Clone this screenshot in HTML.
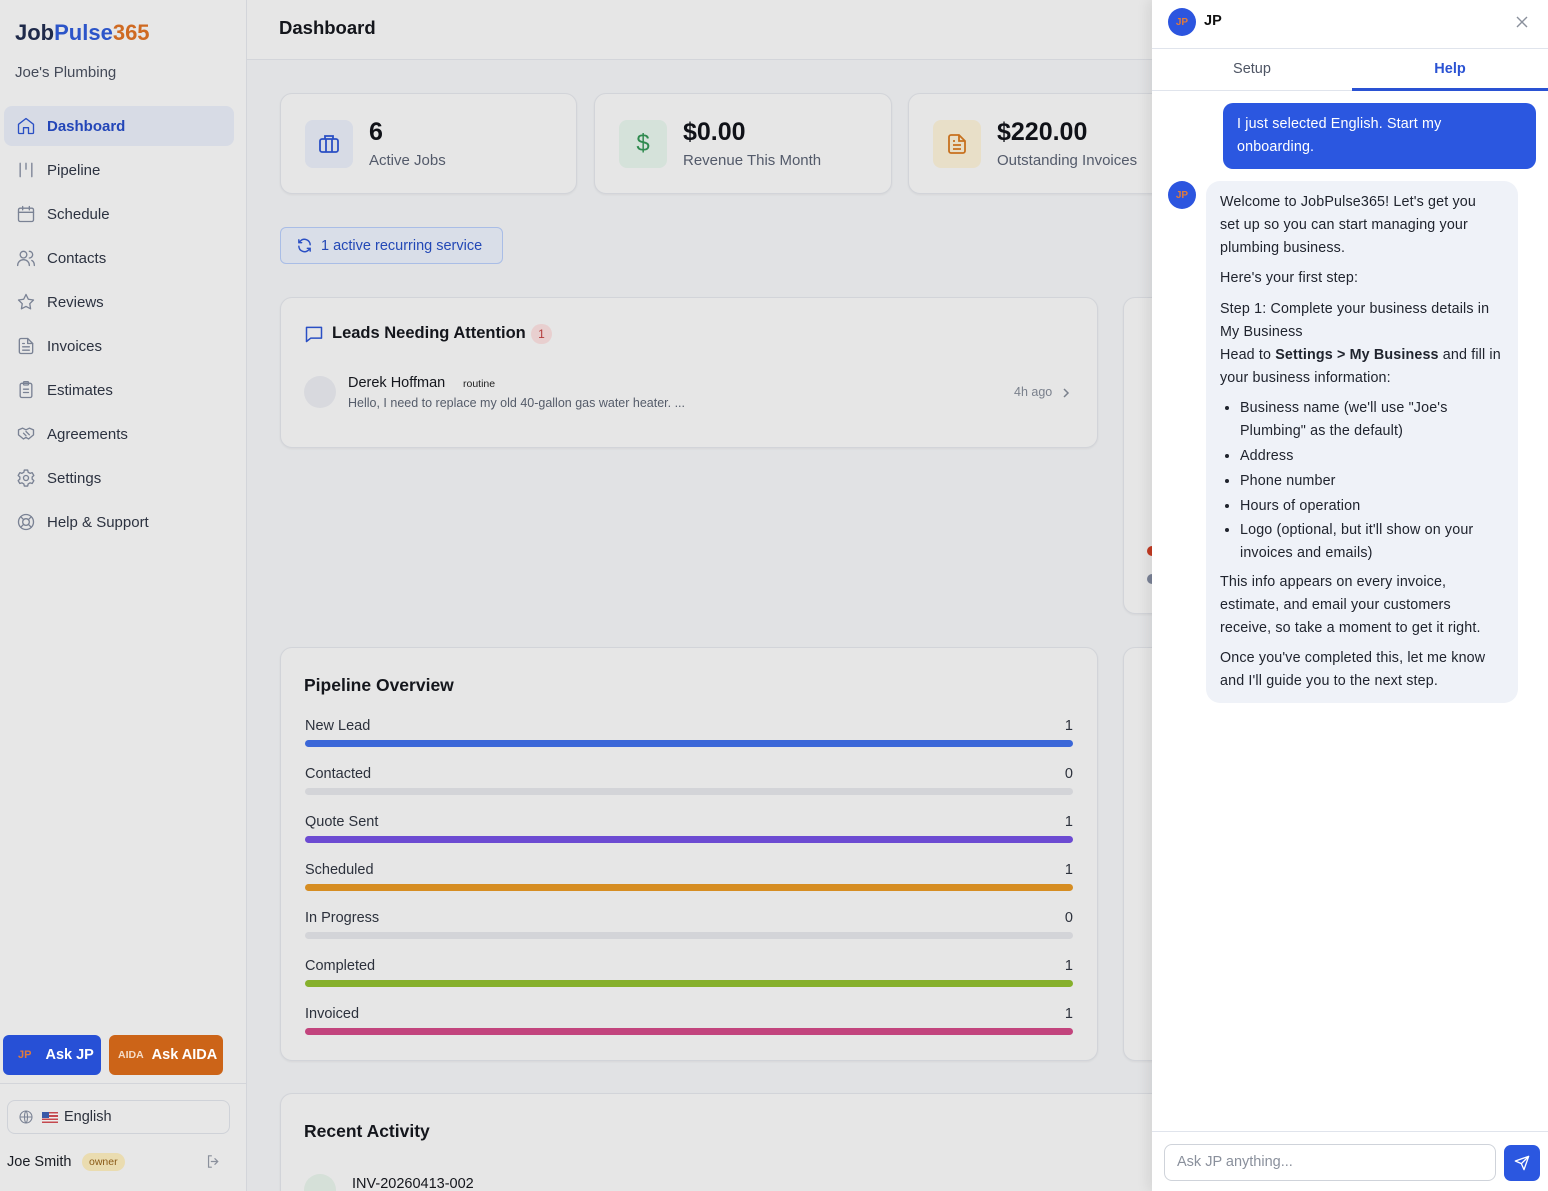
<!DOCTYPE html>
<html style="height:1191px;overflow:hidden"><head><meta charset="utf-8">
<style>
*{box-sizing:border-box;margin:0;padding:0}
html,body{width:1548px;height:1191px;overflow:hidden}
body{font-family:"Liberation Sans",Arial,sans-serif;background:#e1e2e4;position:relative;color:#14161c}
.abs{position:absolute}
.sb{left:0;top:0;width:247px;height:1191px;background:#e7e7e7;border-right:1px solid #d3d5da}
.logo{left:15px;top:20px;font-size:22px;font-weight:bold;letter-spacing:0px}
.nav{left:4px;width:230px;height:40px;display:flex;align-items:center;padding-left:12px;font-size:15px;color:#2c3240;border-radius:8px}
.nav svg{width:20px;height:20px;margin-right:11px;stroke:#7a8294;fill:none;stroke-width:1.6;stroke-linecap:round;stroke-linejoin:round}
.nav.act{background:#d7dbe5;color:#2346b8;font-weight:bold}
.nav.act svg{stroke:#2a4fc4}
.card{background:#e6e6e6;border:1px solid #d2d4d9;border-radius:12px;box-shadow:0 1px 2px rgba(0,0,0,.05);overflow:hidden}
.stat .ic{position:absolute;left:24px;top:26px;width:48px;height:48px;border-radius:8px;display:flex;align-items:center;justify-content:center}
.stat .v{position:absolute;left:88px;top:24px;font-size:25px;font-weight:bold;color:#101218}
.stat .l{position:absolute;left:88px;top:58px;font-size:15px;color:#535a6a}
.row{position:absolute;left:24px;right:24px;height:48px}
.row .n{position:absolute;left:0;top:0;font-size:14.5px;color:#2c313c}
.row .c{position:absolute;right:0;top:0;font-size:14.5px;color:#2c313c}
.row .b{position:absolute;left:0;right:0;top:22px;height:7px;border-radius:4px;background:#d3d4d8}
.panel{left:1152px;top:0;width:396px;height:1191px;background:#fff;box-shadow:-4px 0 12px rgba(0,0,0,.08)}
.av{width:28px;height:28px;border-radius:50%;background:#2c55df;color:#e07a3b;font-size:10px;font-weight:bold;display:flex;align-items:center;justify-content:center}
.bot{left:54px;top:181px;width:312px;background:#eff2f8;border-radius:14px;padding:10px 14px 10px 14px;font-size:14.3px;line-height:22.8px;color:#20242e;white-space:nowrap;letter-spacing:.15px}
.bot p{margin-bottom:8px}
.bot ul{padding-left:20px;margin-bottom:6px}
.bot li{margin-bottom:2px}
</style></head><body>

<div class="abs sb">
  <div class="abs logo"><span style="color:#1f2a4a">Job</span><span style="color:#2c55c9">Pulse</span><span style="color:#cf6a22">365</span></div>
  <div class="abs" style="left:15px;top:64px;font-size:15px;color:#444a58">Joe's Plumbing</div>

  <div class="abs nav act" style="top:106px"><svg viewBox="0 0 24 24"><path d="M3 10l9-7 9 7v10a1 1 0 0 1-1 1h-5v-7H9v7H4a1 1 0 0 1-1-1z"/></svg>Dashboard</div>
  <div class="abs nav" style="top:150px"><svg viewBox="0 0 24 24"><path d="M5 4v16M12 4v7M19 4v16"/></svg>Pipeline</div>
  <div class="abs nav" style="top:194px"><svg viewBox="0 0 24 24"><rect x="3" y="5" width="18" height="16" rx="2"/><path d="M3 10h18M8 3v4M16 3v4"/></svg>Schedule</div>
  <div class="abs nav" style="top:238px"><svg viewBox="0 0 24 24"><circle cx="9" cy="8" r="4"/><path d="M2 21c0-4 3-7 7-7s7 3 7 7M16 4a4 4 0 0 1 0 8M19 15c2 1 3 3 3 6"/></svg>Contacts</div>
  <div class="abs nav" style="top:282px"><svg viewBox="0 0 24 24"><path d="M12 3l2.8 5.7 6.2.9-4.5 4.4 1 6.2L12 17.3 6.5 20.2l1-6.2L3 9.6l6.2-.9z"/></svg>Reviews</div>
  <div class="abs nav" style="top:326px"><svg viewBox="0 0 24 24"><path d="M14 3H6a2 2 0 0 0-2 2v14a2 2 0 0 0 2 2h12a2 2 0 0 0 2-2V9z"/><path d="M14 3v6h6M8 13h8M8 17h8M8 9h2"/></svg>Invoices</div>
  <div class="abs nav" style="top:370px"><svg viewBox="0 0 24 24"><rect x="5" y="4" width="14" height="17" rx="2"/><rect x="9" y="2" width="6" height="4" rx="1"/><path d="M9 11h6M9 15h6"/></svg>Estimates</div>
  <div class="abs nav" style="top:414px"><svg viewBox="0 0 24 24"><path d="M3 7l5-2 4 2 4-2 5 2v6l-6 5-3-2-3 2-6-5z"/><path d="M9 11l3 3M12 9l4 4"/></svg>Agreements</div>
  <div class="abs nav" style="top:458px"><svg viewBox="0 0 24 24"><circle cx="12" cy="12" r="3"/><path d="M10 2.5h4l.6 2.6 2.3 1.3 2.5-.8 2 3.4-2 1.8v2.6l2 1.8-2 3.4-2.5-.8-2.3 1.3-.6 2.6h-4l-.6-2.6-2.3-1.3-2.5.8-2-3.4 2-1.8v-2.6l-2-1.8 2-3.4 2.5.8 2.3-1.3z"/></svg>Settings</div>
  <div class="abs nav" style="top:502px"><svg viewBox="0 0 24 24"><circle cx="12" cy="12" r="9"/><circle cx="12" cy="12" r="4"/><path d="M5.6 5.6l3.6 3.6M14.8 14.8l3.6 3.6M18.4 5.6l-3.6 3.6M9.2 14.8l-3.6 3.6"/></svg>Help &amp; Support</div>

  <div class="abs" style="left:3px;top:1035px;width:98px;height:40px;background:#2750d6;border-radius:6px;display:flex;align-items:center;color:#fff;font-weight:bold;font-size:14.5px"><span style="color:#e07a3b;font-size:11px;margin:0 14px 0 15px">JP</span>Ask JP</div>
  <div class="abs" style="left:109px;top:1035px;width:114px;height:40px;background:#cc6418;border-radius:6px;display:flex;align-items:center;color:#fff;font-weight:bold;font-size:14.5px"><span style="font-size:10.5px;margin:0 8px 0 9px;color:#f4dcc8">AIDA</span>Ask AIDA</div>
  <div class="abs" style="left:0;top:1083px;width:246px;border-top:1px solid #d3d5da"></div>
  <div class="abs" style="left:7px;top:1100px;width:223px;height:34px;border:1px solid #cfd2d8;border-radius:8px;display:flex;align-items:center;padding-left:10px;font-size:14.5px;color:#2c313c">
    <svg width="16" height="16" viewBox="0 0 24 24" fill="none" stroke="#7a8294" stroke-width="1.6"><circle cx="12" cy="12" r="9"/><path d="M3 12h18M12 3c3 3 3 15 0 18M12 3c-3 3-3 15 0 18"/></svg>
    <span style="display:inline-block;width:16px;height:11px;margin:0 6px 0 8px;background:repeating-linear-gradient(#c4484e 0 1.6px,#eee 1.6px 3.2px);position:relative"><span style="position:absolute;left:0;top:0;width:7px;height:6px;background:#3b5aa8"></span></span>English</div>
  <div class="abs" style="left:7px;top:1154px;font-size:14.5px;color:#1a1d24">Joe Smith</div>
  <div class="abs" style="left:82px;top:1153px;height:18px;padding:0 7px;background:#eadcb0;border-radius:9px;font-size:10.5px;line-height:18px;color:#8a5a16">owner</div>
  <svg class="abs" style="left:205px;top:1153px" width="17" height="17" viewBox="0 0 24 24" fill="none" stroke="#8a909c" stroke-width="1.7" stroke-linecap="round"><path d="M9 4H5v16h4M14 8l4 4-4 4M18 12H9"/></svg>
</div>

<div class="abs" style="left:247px;top:0;width:905px;height:60px;border-bottom:1px solid #d3d5da;background:#e6e6e6"></div>
<div class="abs" style="left:279px;top:17px;font-size:18.5px;font-weight:bold;color:#14161c">Dashboard</div>

<div class="abs card stat" style="left:280px;top:93px;width:297px;height:101px">
  <div class="ic" style="background:#d7dbe5"><svg width="24" height="24" viewBox="0 0 24 24" fill="none" stroke="#2a4fc4" stroke-width="1.8"><rect x="3" y="7" width="18" height="13" rx="2"/><path d="M8 7V4h8v3M9 7v13M15 7v13"/></svg></div>
  <div class="v">6</div><div class="l">Active Jobs</div>
</div>
<div class="abs card stat" style="left:594px;top:93px;width:298px;height:101px">
  <div class="ic" style="background:#d5e2da;font-size:24px;color:#2e8a4e">$</div>
  <div class="v">$0.00</div><div class="l">Revenue This Month</div>
</div>
<div class="abs card stat" style="left:908px;top:93px;width:290px;height:101px">
  <div class="ic" style="background:#e8dfc8"><svg width="24" height="24" viewBox="0 0 24 24" fill="none" stroke="#c7711e" stroke-width="1.8"><path d="M14 3H6a2 2 0 0 0-2 2v14a2 2 0 0 0 2 2h12a2 2 0 0 0 2-2V9z"/><path d="M14 3v6h6M8 13h8M8 17h8M8 9h2"/></svg></div>
  <div class="v">$220.00</div><div class="l">Outstanding Invoices</div>
</div>

<div class="abs" style="left:280px;top:227px;width:223px;height:37px;background:#d9dee8;border:1px solid #a9bde6;border-radius:6px;display:flex;align-items:center;padding-left:15px;font-size:14.5px;color:#2348b6">
  <svg width="17" height="17" viewBox="0 0 24 24" fill="none" stroke="#2a4fc4" stroke-width="2" stroke-linecap="round"><path d="M20 11a8 8 0 0 0-14-5l-2 2M4 4v4h4M4 13a8 8 0 0 0 14 5l2-2M20 20v-4h-4"/></svg>
  <span style="margin-left:8px">1 active recurring service</span></div>

<div class="abs card" style="left:280px;top:297px;width:818px;height:151px">
  <svg class="abs" style="left:23px;top:26px" width="20" height="20" viewBox="0 0 24 24" fill="none" stroke="#2a4fc4" stroke-width="1.8" stroke-linejoin="round"><path d="M3 4h18v13H8l-5 4z"/></svg>
  <div class="abs" style="left:51px;top:26px;font-size:16.5px;font-weight:bold;color:#14161c">Leads Needing Attention</div>
  <div class="abs" style="left:250px;top:26px;width:21px;height:20px;border-radius:10px;background:#e8cfcf;color:#b33a3a;font-size:12px;text-align:center;line-height:20px">1</div>
  <div class="abs" style="left:23px;top:78px;width:32px;height:32px;border-radius:50%;background:#d8d9de"></div>
  <div class="abs" style="left:67px;top:77px;font-size:14.5px;color:#14161c">Derek Hoffman</div>
  <div class="abs" style="left:182px;top:80px;font-size:10.5px;color:#222">routine</div>
  <div class="abs" style="left:67px;top:98px;font-size:12.5px;color:#555c6a">Hello, I need to replace my old 40-gallon gas water heater. ...</div>
  <div class="abs" style="left:733px;top:87px;font-size:12.5px;color:#7a808c">4h ago</div>
  <svg class="abs" style="left:780px;top:89px" width="10" height="12" viewBox="0 0 10 12" fill="none" stroke="#7a808c" stroke-width="1.5"><path d="M3 2l4 4-4 4"/></svg>
</div>

<div class="abs card" style="left:1123px;top:297px;width:60px;height:317px"></div>
<div class="abs" style="left:1147px;top:546px;width:10px;height:10px;border-radius:50%;background:#c23a22"></div>
<div class="abs" style="left:1147px;top:574px;width:10px;height:10px;border-radius:50%;background:#7a8296"></div>

<div class="abs card" style="left:280px;top:647px;width:818px;height:414px">
  <div class="abs" style="left:23px;top:27px;font-size:17.5px;font-weight:bold;color:#14161c">Pipeline Overview</div>
  <div class="row" style="top:70px"><div class="n">New Lead</div><div class="c">1</div><div class="b" style="background:#3b67d8"></div></div>
  <div class="row" style="top:118px"><div class="n">Contacted</div><div class="c">0</div><div class="b"></div></div>
  <div class="row" style="top:166px"><div class="n">Quote Sent</div><div class="c">1</div><div class="b" style="background:#6c4bd2"></div></div>
  <div class="row" style="top:214px"><div class="n">Scheduled</div><div class="c">1</div><div class="b" style="background:#d68d22"></div></div>
  <div class="row" style="top:262px"><div class="n">In Progress</div><div class="c">0</div><div class="b"></div></div>
  <div class="row" style="top:310px"><div class="n">Completed</div><div class="c">1</div><div class="b" style="background:#86b02c"></div></div>
  <div class="row" style="top:358px"><div class="n">Invoiced</div><div class="c">1</div><div class="b" style="background:#c2447d"></div></div>
</div>
<div class="abs card" style="left:1123px;top:647px;width:60px;height:414px"></div>

<div class="abs card" style="left:280px;top:1093px;width:900px;height:98px;border-bottom:none;border-radius:12px 12px 0 0">
  <div class="abs" style="left:23px;top:27px;font-size:17.5px;font-weight:bold;color:#14161c">Recent Activity</div>
  <div class="abs" style="left:23px;top:80px;width:32px;height:32px;border-radius:50%;background:#d5e0d8"></div>
  <div class="abs" style="left:71px;top:82px;font-size:14.5px;color:#14161c">INV-20260413-002</div>
</div>

<div class="abs panel">
  <div class="abs av" style="left:16px;top:8px">JP</div>
  <div class="abs" style="left:52px;top:13px;font-size:14.5px;font-weight:bold;color:#111">JP</div>
  <svg class="abs" style="left:364px;top:16px" width="12" height="12" viewBox="0 0 12 12" stroke="#8a909c" stroke-width="1.4"><path d="M1 1l10 10M11 1L1 11"/></svg>
  <div class="abs" style="left:0;top:48px;width:396px;border-top:1px solid #e0e4ec"></div>
  <div class="abs" style="left:0;top:61px;width:200px;text-align:center;font-size:14.5px;color:#4e5564">Setup</div>
  <div class="abs" style="left:200px;top:61px;width:196px;text-align:center;font-size:14.5px;color:#2a52d3;font-weight:bold">Help</div>
  <div class="abs" style="left:0;top:90px;width:396px;border-top:1px solid #e0e4ec"></div>
  <div class="abs" style="left:200px;top:88px;width:196px;height:3px;background:#2a52d3"></div>

  <div class="abs" style="left:71px;top:103px;width:313px;height:66px;background:#2b57e0;border-radius:10px;padding:10px 14px;color:#fff;font-size:14.3px;line-height:23px;white-space:nowrap;letter-spacing:.15px">I just selected English. Start my<br>onboarding.</div>

  <div class="abs av" style="left:16px;top:181px">JP</div>
  <div class="abs bot">
    <p>Welcome to JobPulse365! Let's get you<br>set up so you can start managing your<br>plumbing business.</p>
    <p>Here's your first step:</p>
    <p>Step 1: Complete your business details in<br>My Business<br>Head to <b>Settings &gt; My Business</b> and fill in<br>your business information:</p>
    <ul>
      <li>Business name (we'll use "Joe's<br>Plumbing" as the default)</li>
      <li>Address</li>
      <li>Phone number</li>
      <li>Hours of operation</li>
      <li>Logo (optional, but it'll show on your<br>invoices and emails)</li>
    </ul>
    <p>This info appears on every invoice,<br>estimate, and email your customers<br>receive, so take a moment to get it right.</p>
    <p style="margin-bottom:0">Once you've completed this, let me know<br>and I'll guide you to the next step.</p>
  </div>

  <div class="abs" style="left:0;top:1131px;width:396px;border-top:1px solid #e0e4ec"></div>
  <div class="abs" style="left:12px;top:1144px;width:332px;height:37px;border:1px solid #cfd3da;border-radius:8px;padding-left:12px;line-height:35px;font-size:14.5px;color:#8a909c">Ask JP anything...</div>
  <div class="abs" style="left:352px;top:1145px;width:36px;height:36px;background:#2b57e0;border-radius:7px;display:flex;align-items:center;justify-content:center">
    <svg width="16" height="16" viewBox="0 0 24 24" fill="none" stroke="#fff" stroke-width="2" stroke-linejoin="round"><path d="M22 2L11 13M22 2l-7 20-4-9-9-4z"/></svg></div>
</div>
</body></html>
